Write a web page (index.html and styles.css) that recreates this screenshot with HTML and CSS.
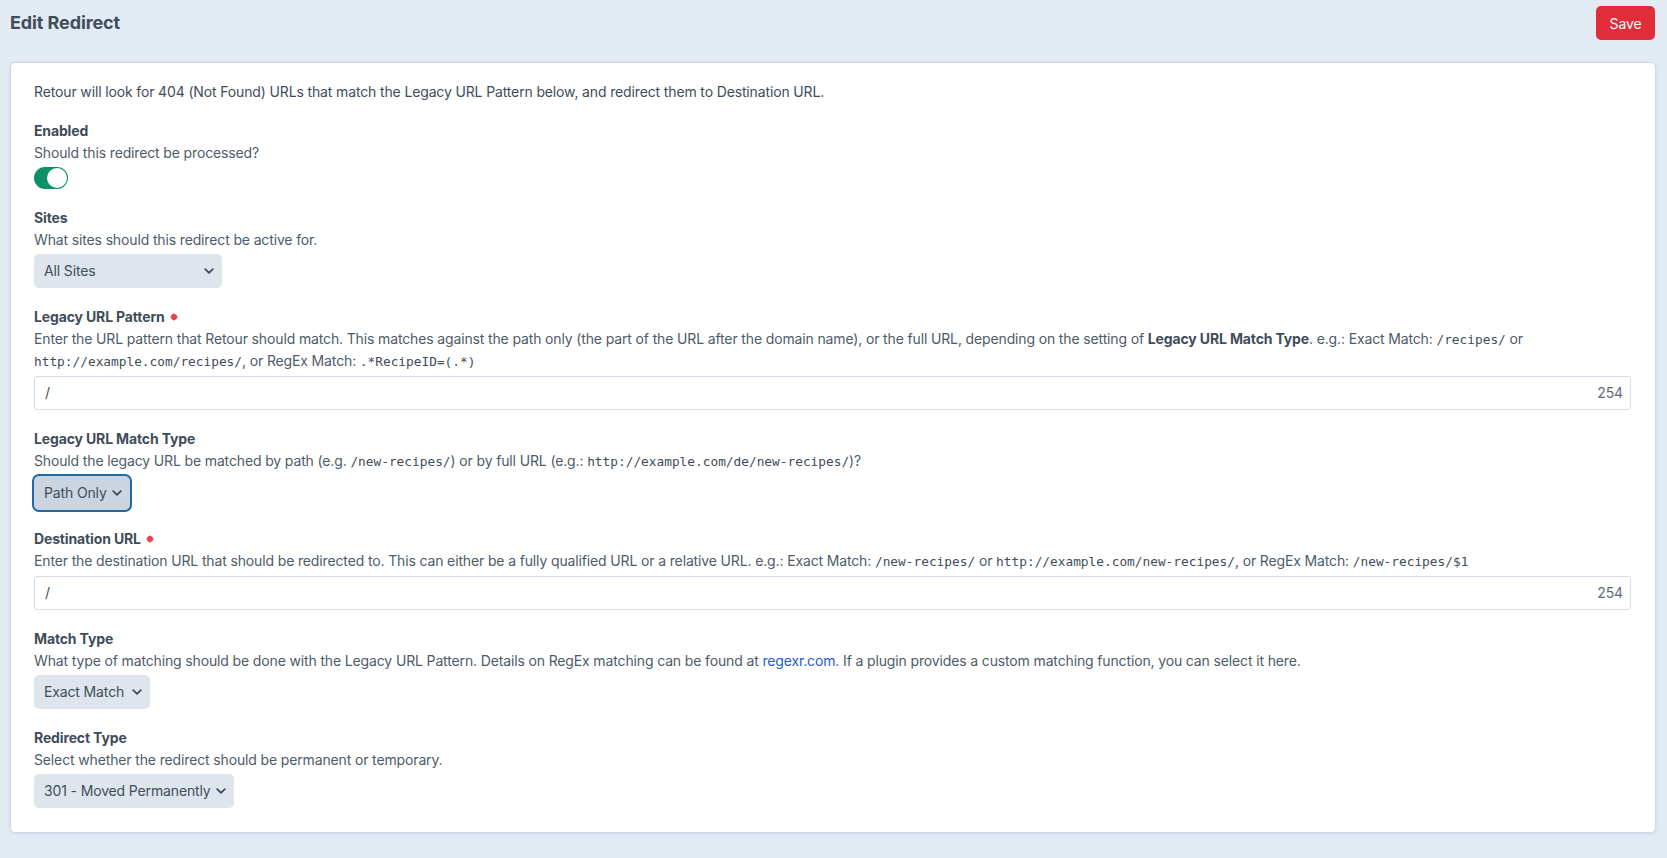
FILE: index.html
```html
<!DOCTYPE html>
<html lang="en">
<head>
    <meta charset="UTF-8">
    <meta name="viewport" content="width=device-width, initial-scale=1.0">
    <title>Edit Redirect</title>
    <link rel="stylesheet" href="styles.css">
</head>
<body>
    <header class="page-header">
        <h1 class="page-title">Edit Redirect</h1>
        <button type="button" class="btn-save">Save</button>
    </header>

    <form class="card" id="redirect_form">
        <p class="intro">Retour will look for 404 (Not Found) URLs that match the Legacy URL Pattern below, and redirect them to Destination URL.</p>

        <div class="field">
            <div class="heading"><label>Enabled</label></div>
            <div class="instructions">Should this redirect be processed?</div>
            <div class="input">
                <div class="lightswitch on"><span class="knob"></span></div>
            </div>
        </div>

        <div class="field">
            <div class="heading"><label>Sites</label></div>
            <div class="instructions">What sites should this redirect be active for.</div>
            <div class="input">
                <div class="select select-sites">
                    <span>All Sites</span>
                    <svg width="10" height="6" viewBox="0 0 10 6"><path d="M1.2 1.2L5 4.8l3.8-3.6" fill="none" stroke="currentColor" stroke-width="1.8" stroke-linecap="round" stroke-linejoin="round"/></svg>
                </div>
            </div>
        </div>

        <div class="field">
            <div class="heading"><label class="required">Legacy URL Pattern</label></div>
            <div class="instructions">Enter the URL pattern that Retour should match. This matches against the path only (the part of the URL after the domain name), or the full URL, depending on the setting of <strong>Legacy URL Match Type</strong>. e.g.: Exact Match: <code>/recipes/</code> or<br><code>http://example.com/recipes/</code>, or RegEx Match: <code>.*RecipeID=(.*)</code></div>
            <div class="input">
                <div class="text-input">
                    <span class="value">/</span>
                    <span class="counter">254</span>
                </div>
            </div>
        </div>

        <div class="field field-focused">
            <div class="heading"><label>Legacy URL Match Type</label></div>
            <div class="instructions">Should the legacy URL be matched by path (e.g. <code>/new-recipes/</code>) or by full URL (e.g.: <code>http://example.com/de/new-recipes/</code>)?</div>
            <div class="input">
                <div class="select select-path focus">
                    <span>Path Only</span>
                    <svg width="10" height="6" viewBox="0 0 10 6"><path d="M1.2 1.2L5 4.8l3.8-3.6" fill="none" stroke="currentColor" stroke-width="1.8" stroke-linecap="round" stroke-linejoin="round"/></svg>
                </div>
            </div>
        </div>

        <div class="field">
            <div class="heading"><label class="required">Destination URL</label></div>
            <div class="instructions">Enter the destination URL that should be redirected to. This can either be a fully qualified URL or a relative URL. e.g.: Exact Match: <code>/new-recipes/</code> or <code>http://example.com/new-recipes/</code>, or RegEx Match: <code>/new-recipes/$1</code></div>
            <div class="input">
                <div class="text-input">
                    <span class="value">/</span>
                    <span class="counter">254</span>
                </div>
            </div>
        </div>

        <div class="field">
            <div class="heading"><label>Match Type</label></div>
            <div class="instructions">What type of matching should be done with the Legacy URL Pattern. Details on RegEx matching can be found at <a href="#">regexr.com</a>. If a plugin provides a custom matching function, you can select it here.</div>
            <div class="input">
                <div class="select select-match">
                    <span>Exact Match</span>
                    <svg width="10" height="6" viewBox="0 0 10 6"><path d="M1.2 1.2L5 4.8l3.8-3.6" fill="none" stroke="currentColor" stroke-width="1.8" stroke-linecap="round" stroke-linejoin="round"/></svg>
                </div>
            </div>
        </div>

        <div class="field">
            <div class="heading"><label>Redirect Type</label></div>
            <div class="instructions">Select whether the redirect should be permanent or temporary.</div>
            <div class="input">
                <div class="select select-redirect">
                    <span>301 - Moved Permanently</span>
                    <svg width="10" height="6" viewBox="0 0 10 6"><path d="M1.2 1.2L5 4.8l3.8-3.6" fill="none" stroke="currentColor" stroke-width="1.8" stroke-linecap="round" stroke-linejoin="round"/></svg>
                </div>
            </div>
        </div>
    </form>
</body>
</html>
```

FILE: styles.css
```css
* {
    box-sizing: border-box;
}
body {
    margin: 0;
    min-height: 858px;
    background: #e2eaf3;
    color: #3f4d5a;
    font-family: Inter, "Liberation Sans", sans-serif;
    font-size: 14px;
    line-height: 20px;
    letter-spacing: -0.14px;
}
.page-header {
    display: flex;
    justify-content: space-between;
    align-items: center;
    height: 40px;
    padding: 6px 12px 0 10px;
}
.page-title {
    margin: 0;
    font-size: 18px;
    font-weight: 700;
    letter-spacing: -0.1px;
}
.btn-save {
    width: 59px;
    height: 34px;
    border: 0;
    border-radius: 5px;
    background: #e12d39;
    color: #fff;
    font-family: inherit;
    font-size: 14px;
    letter-spacing: -0.1px;
}
.card {
    margin: 22px 11px 0 10px;
    padding: 19px 24px 24px 23px;
    background: #fff;
    border: 1px solid #cdd8e4;
    border-radius: 5px;
    box-shadow: 0 1px 3px rgba(96, 125, 159, 0.15);
}
.intro {
    margin: 0;
}
.field {
    margin-top: 19px;
}
.field-focused {
    margin-bottom: 2px;
}
.heading label {
    font-weight: 700;
}
.required:after {
    content: '';
    display: inline-block;
    width: 6px;
    height: 6px;
    margin-left: 6px;
    vertical-align: 2px;
    background: #e5434f;
    border-radius: 2px;
    transform: rotate(45deg);
}
.instructions {
    margin-top: 1px;
    line-height: 21px;
    color: #4e5b69;
}
.instructions strong {
    color: #3f4d5a;
}
.instructions code {
    font-family: "DejaVu Sans Mono", "Liberation Mono", monospace;
    font-size: 12.8px;
    letter-spacing: 0;
    color: #3f4d5a;
}
.instructions a {
    color: #1f5bd6;
    text-decoration: none;
}
.input {
    margin-top: 4px;
}
.lightswitch {
    position: relative;
    width: 34px;
    height: 22px;
    border-radius: 11px;
    background: #0d9068;
}
.lightswitch .knob {
    position: absolute;
    top: 1px;
    right: 1px;
    width: 20px;
    height: 20px;
    border-radius: 50%;
    background: #fff;
}
.select {
    display: inline-flex;
    justify-content: space-between;
    align-items: center;
    gap: 5px;
    height: 34px;
    padding: 0 8px 0 10px;
    border-radius: 5px;
    background: #dfe5ec;
    color: #3f4d5a;
}
.select svg {
    flex: none;
}
.select-sites {
    width: 188px;
}
.select-match {
    width: 116px;
}
.select-redirect {
    width: 200px;
}
.select.focus {
    background: #cbd4df;
    box-shadow: 0 0 0 2px #1f6aa5;
}
.text-input {
    display: flex;
    justify-content: space-between;
    align-items: center;
    height: 34px;
    padding: 0 7px 0 10px;
    border: 1px solid #d6dde6;
    border-radius: 3px;
}
.text-input .counter {
    color: #606d7b;
}
```
